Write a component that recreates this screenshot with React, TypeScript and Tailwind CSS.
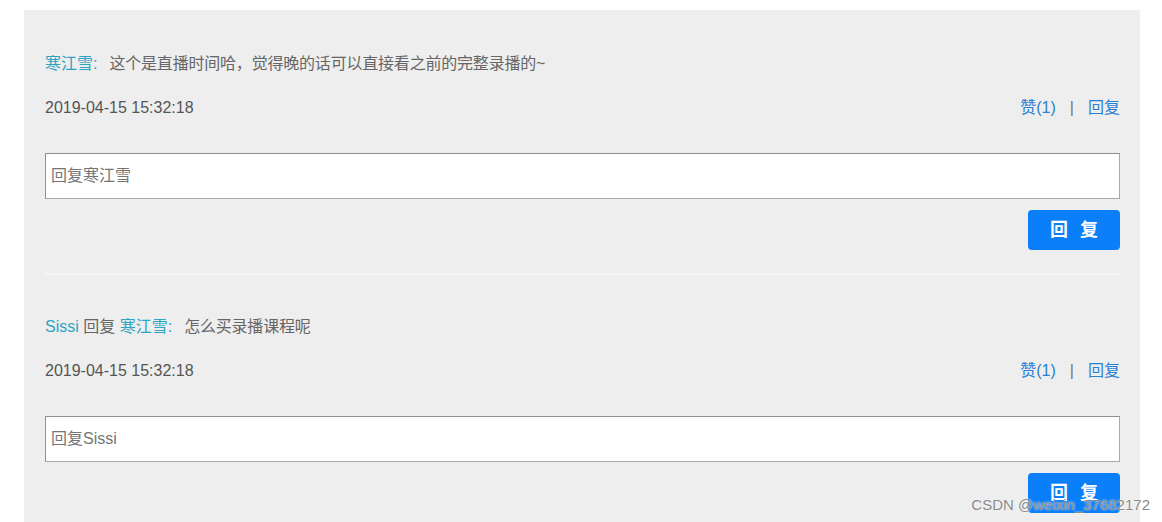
const comments = [
  {
    id: 1,
    from: "寒江雪",
    to: "",
    text: "这个是直播时间哈，觉得晚的话可以直接看之前的完整录播的~",
    time: "2019-04-15 15:32:18",
    likes: 1,
  },
  {
    id: 2,
    from: "Sissi",
    to: "寒江雪",
    text: "怎么买录播课程呢",
    time: "2019-04-15 15:32:18",
    likes: 1,
  },
];

type Comment = (typeof comments)[number];

function CommentItem({ c }: { c: Comment }) {
  return (
    <div className="pt-[40px]">
      {/* content line */}
      <p className="h-[24px] text-[16px] leading-[24px] text-[#666]">
        <span className="text-[#2fa3c4]">{c.from}</span>
        {c.to && (
          <>
            <span className="text-[#666]"> 回复 </span>
            <span className="text-[#2fa3c4]">{c.to}</span>
          </>
        )}
        <span className="text-[#2fa3c4]">:</span>
        <span className="ml-[12px] tracking-[-0.2px]">{c.text}</span>
      </p>

      {/* meta line */}
      <div className="mt-[20px] flex h-[24px] items-center justify-between text-[16px] leading-[24px]">
        <span className="text-[#555]">{c.time}</span>
        <div className="flex items-center gap-[14px]">
          <a className="text-[#2b7fd2]">赞({c.likes})</a>
          <span className="text-[#777]">|</span>
          <a className="text-[#2b7fd2]">回复</a>
        </div>
      </div>

      {/* reply box */}
      <input
        className="mt-[33px] block h-[46px] w-full border border-[#a9a9a9] border-t-[#8f8f8f] border-l-[#8f8f8f] bg-white px-[5px] text-[16px] outline-none placeholder:text-[#757575]"
        placeholder={"回复" + c.from}
      />
      <div className="mt-[11px] flex justify-end">
        <button className="flex h-[40px] w-[92px] items-center justify-center gap-[12px] rounded-[4px] bg-[#0b7ef9] text-[18px] font-bold text-white">
          <span>回</span>
          <span>复</span>
        </button>
      </div>
    </div>
  );
}

export default function App() {
  return (
    <div
      className="relative h-[522px] w-[1162px] overflow-hidden bg-white"
      style={{ fontFamily: '"Liberation Sans", "Noto Sans CJK SC", sans-serif' }}
    >
      <div className="ml-[24px] mt-[10px] w-[1116px] bg-[#eeeeee] pb-[40px] pl-[21px] pr-[20px] pt-[2px]">
        {comments.map((c, i) => (
          <div key={c.id}>
            {i > 0 && <div className="mt-[23px] h-[2px] bg-[#f5f5f5]" />}
            <CommentItem c={c} />
          </div>
        ))}
      </div>

      {/* watermark overlaid on the screenshot */}
      <span className="absolute bottom-[6px] right-[12px] text-[15px] text-[#8a8a8a] [text-shadow:0_0_2px_#fff]">
        CSDN @weixin_37682172
      </span>
    </div>
  );
}
